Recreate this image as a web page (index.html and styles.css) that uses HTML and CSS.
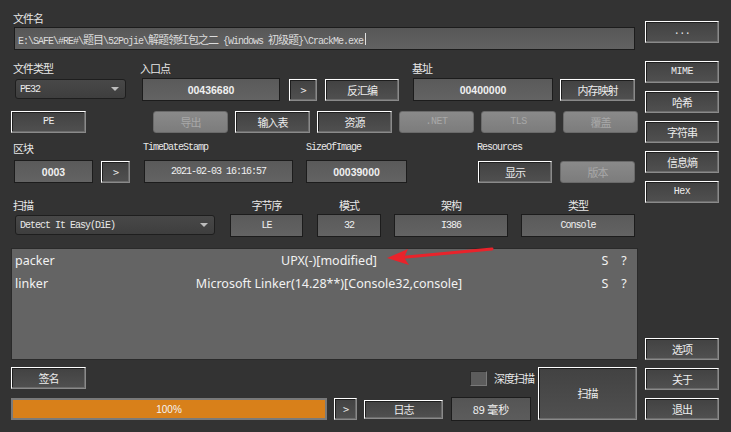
FILE: index.html
```html
<!DOCTYPE html>
<html>
<head>
<meta charset="utf-8">
<link rel="stylesheet" href="styles.css">
</head>
<body>
<div class="app">
  <div class="main">
    <div class="lbl row-a">文件名</div>
    <div class="field path mono"><span class="ptxt">E:\SAFE\#RE#\<span class="cj">题目</span>\52Pojie\<span class="cj">解题领红包之二</span> {Windows <span class="cj">初级题</span>}\CrackMe.exe</span><span class="caret"></span></div>

    <div class="row row-b">
      <div class="col c1">
        <div class="lbl">文件类型</div>
        <div class="ctl"><div class="combo mono w-pe"><span>PE32</span><span class="arr"></span></div></div>
      </div>
      <div class="col c2">
        <div class="lbl">入口点</div>
        <div class="ctl">
          <div class="field num f-ep">00436680</div>
          <button class="btn b-go">&gt;</button>
          <button class="btn b-dis">反汇编</button>
        </div>
      </div>
      <div class="col c3">
        <div class="lbl">基址</div>
        <div class="ctl">
          <div class="field num f-base">00400000</div>
          <button class="btn b-mm">内存映射</button>
        </div>
      </div>
    </div>

    <div class="row row-c">
      <button class="btn mono b75 b-pe">PE</button>
      <button class="btn off b75 b-exp">导出</button>
      <button class="btn b75 g7">输入表</button>
      <button class="btn b75 g7">资源</button>
      <button class="btn off mono b75 g7">.NET</button>
      <button class="btn off mono b75 g7">TLS</button>
      <button class="btn off b75 g7">覆盖</button>
    </div>

    <div class="row row-d">
      <div class="col d1">
        <div class="lbl">区块</div>
        <div class="ctl">
          <div class="field num f-sec">0003</div>
          <button class="btn b-sec">&gt;</button>
        </div>
      </div>
      <div class="col d2">
        <div class="lbl mono">TimeDateStamp</div>
        <div class="ctl"><div class="field mono f-tds"><span class="pre">2021-02-03 16:16:57</span></div></div>
      </div>
      <div class="col d3">
        <div class="lbl mono">SizeOfImage</div>
        <div class="ctl"><div class="field num f-soi">00039000</div></div>
      </div>
      <div class="col d4">
        <div class="lbl mono">Resources</div>
        <div class="ctl">
          <button class="btn b-show">显示</button>
          <button class="btn off b-ver">版本</button>
        </div>
      </div>
    </div>

    <div class="row row-e">
      <div class="col e1">
        <div class="lbl">扫描</div>
        <div class="ctl"><div class="combo mono w-scan"><span class="pre">Detect It Easy(DiE)</span><span class="arr"></span></div></div>
      </div>
      <div class="col e2 ctr">
        <div class="lbl">字节序</div>
        <div class="ctl"><div class="field mono f-le">LE</div></div>
      </div>
      <div class="col e3 ctr">
        <div class="lbl">模式</div>
        <div class="ctl"><div class="field mono f-32">32</div></div>
      </div>
      <div class="col e4 ctr">
        <div class="lbl">架构</div>
        <div class="ctl"><div class="field mono f-arch">I386</div></div>
      </div>
      <div class="col e5 ctr">
        <div class="lbl">类型</div>
        <div class="ctl"><div class="field mono f-type">Console</div></div>
      </div>
    </div>

    <div class="results">
      <div class="res-row"><span class="rt">packer</span><span class="rn">UPX(-)[modified]</span><span class="rs">S</span><span class="rq">?</span></div>
      <div class="res-row"><span class="rt">linker</span><span class="rn">Microsoft Linker(14.28**)[Console32,console]</span><span class="rs">S</span><span class="rq">?</span></div>
      <svg class="arrow" width="110" height="24" viewBox="0 0 110 24">
        <line x1="105" y1="2" x2="14" y2="10.5" stroke="#e8232b" stroke-width="3" stroke-linecap="round"/>
        <polygon points="0,11 21,2 17,10.5 22,18" fill="#e8232b"/>
      </svg>
    </div>

    <div class="bottom">
      <div class="bl">
        <div class="brow1">
          <button class="btn b-sig">签名</button>
          <span class="chk"></span>
          <span class="chk-lbl">深度扫描</span>
        </div>
        <div class="brow2">
          <div class="progress"><span>100%</span></div>
          <button class="btn b-pg">&gt;</button>
          <button class="btn b-log">日志</button>
          <div class="field ms"><span class="pre">89 毫秒</span></div>
        </div>
      </div>
      <button class="btn b-scan">扫描</button>
    </div>
  </div>

  <div class="side">
    <button class="btn sb mono">...</button>
    <button class="btn sb mono s-mime">MIME</button>
    <button class="btn sb">哈希</button>
    <button class="btn sb">字符串</button>
    <button class="btn sb">信息熵</button>
    <button class="btn sb mono">Hex</button>
    <div class="spacer"></div>
    <button class="btn sb">选项</button>
    <button class="btn sb">关于</button>
    <button class="btn sb">退出</button>
  </div>
</div>
</body>
</html>
```

FILE: styles.css
```css
* { box-sizing: border-box; }
html, body {
  margin: 0;
  padding: 0;
  width: 731px;
  height: 432px;
  overflow: hidden;
  background: #333333;
  color: #e6e6e6;
  font-family: "Noto Sans CJK SC", "Liberation Sans", sans-serif;
  font-size: 11px;
  letter-spacing: -1px;
}
.app { display: flex; width: 731px; height: 432px; }
.main { width: 645px; display: flex; flex-direction: column; }
.side {
  width: 74px;
  display: flex;
  flex-direction: column;
  gap: 8px;
  padding: 21px 0 12px;
}
.spacer { flex: 1; }
.s-mime { margin-top: 10px; }

.mono {
  font-family: "Liberation Mono", "Noto Sans CJK SC", monospace;
  font-size: 10px;
  letter-spacing: -1px;
}
.cj { font-family: "Noto Sans CJK SC", sans-serif; font-size: 11px; letter-spacing: -1px; }
.pre, .ptxt { white-space: pre; }

.lbl {
  height: 12px;
  line-height: 12px;
  color: #e8e8e8;
  white-space: nowrap;
}
.row-a { margin: 12px 0 0 13px; }

.field {
  height: 23px;
  display: flex;
  align-items: center;
  justify-content: center;
  border: 1px solid #1c1c1c;
  background: linear-gradient(#5a5a5a, #636363);
  color: #f0f0f0;
  white-space: nowrap;
}
.num {
  font-family: "Liberation Sans", sans-serif;
  font-weight: bold;
  font-size: 10.5px;
  letter-spacing: 0;
}
.path {
  margin: 3px 0 0 14px;
  width: 621px;
  justify-content: flex-start;
  padding-left: 3px;
  background: linear-gradient(#575757, #626262);
  color: #dcdcdc;
}
.caret { display: inline-block; width: 1px; height: 12px; background: #e0e0e0; margin-left: 2px; }

.row { display: flex; align-items: flex-start; }
.col { display: flex; flex-direction: column; }
.ctl { display: flex; align-items: flex-start; height: 23px; }
.ctr { align-items: center; }
.ctr .ctl { align-self: stretch; }

.btn {
  height: 22px;
  padding: 0;
  border: 1px solid;
  border-color: #ffffff #8a8a8a #8a8a8a #ffffff;
  box-shadow: inset -1px -1px 0 #6c6c6c, inset 1px 1px 0 #1e1e1e;
  background: linear-gradient(#424242, #505050);
  color: #ececec;
  font-family: "Noto Sans CJK SC", sans-serif;
  font-size: 11px;
  letter-spacing: -1px;
  line-height: 1;
  flex: none;
}
.btn.mono { font-family: "Liberation Mono", monospace; font-size: 10px; letter-spacing: -0.5px; }
.btn.off {
  border: 1px solid #6a6a6a;
  border-radius: 3px;
  box-shadow: none;
  background: linear-gradient(#8a8a8a, #7c7c7c);
  color: #a8a8a8;
}

.combo {
  position: relative;
  height: 20px;
  margin: 1px 0 0 2px;
  display: flex;
  align-items: center;
  padding-left: 4px;
  border: 1px solid #1e1e1e;
  border-radius: 3px;
  background: linear-gradient(#484848, #3e3e3e);
  color: #e8e8e8;
  white-space: nowrap;
}
.arr {
  position: absolute;
  right: 6px;
  top: 7px;
  width: 0;
  height: 0;
  border-left: 4px solid transparent;
  border-right: 4px solid transparent;
  border-top: 4px solid #bdbdbd;
}

/* row B */
.row-b { margin-top: 12px; }
.row-b .ctl { margin-top: 4px; }
.c1 { margin-left: 13px; width: 113px; }
.w-pe { width: 111px; }
.c2 { margin-left: 14px; }
.f-ep { margin-left: 2px; width: 138px; }
.b-go { margin: 1px 0 0 9px; width: 28px; }
.b-dis { margin: 1px 0 0 8px; width: 74px; }
.c3 { margin-left: 13px; }
.f-base { margin-left: 1px; width: 140px; }
.b-mm { margin: 1px 0 0 7px; width: 75px; }

/* row C */
.row-c { margin-top: 10px; }
.b75 { width: 75px; }
.b-pe { margin-left: 11px; }
.b-exp { margin-left: 67px; }
.g7 { margin-left: 7px; }

/* row D */
.row-d { margin-top: 9px; }
.row-d .ctl { margin-top: 6px; }
.d1 { margin-left: 13px; }
.f-sec { margin-left: 1px; width: 79px; }
.b-sec { margin: 1px 0 0 8px; width: 29px; }
.d2 { margin-left: 13px; }
.f-tds { margin-left: 1px; width: 149px; }
.d3 { margin-left: 13px; }
.f-soi { width: 101px; }
.d4 { margin-left: 70px; }
.b-show { margin: 1px 0 0 1px; width: 74px; }
.b-ver { margin: 1px 0 0 8px; width: 75px; }

/* row E */
.row-e { margin-top: 16px; }
.row-e .ctl { margin-top: 3px; }
.e1 { margin-left: 13px; }
.w-scan { width: 200px; }
.e2 { margin-left: 15px; width: 73px; }
.e3 { margin-left: 14px; width: 64px; }
.e4 { margin-left: 13px; width: 114px; }
.e5 { margin-left: 13px; width: 114px; }
.ctr .field { width: 100%; }

/* results */
.results {
  position: relative;
  margin: 11px 0 0 11px;
  width: 627px;
  height: 112px;
  border: 1px solid #2a2a2a;
  background: #646464;
  font-family: "Noto Sans", "Liberation Sans", sans-serif;
  font-size: 12.5px;
  letter-spacing: 0;
  color: #f2f2f2;
}
.res-row {
  display: grid;
  grid-template-columns: 51px 526px 26px 12px;
  padding-left: 3px;
  height: 23px;
  line-height: 23px;
}
.rn, .rs, .rq { text-align: center; }
.arrow { position: absolute; left: 375px; top: -2px; }

/* bottom */
.bottom { display: flex; margin-top: 7px; }
.bl { width: 538px; display: flex; flex-direction: column; }
.brow1 { display: flex; align-items: flex-start; height: 22px; }
.b-sig { margin-left: 11px; width: 75px; }
.chk {
  margin: 4px 0 0 384px;
  width: 17px;
  height: 15px;
  border: 1px solid;
  border-color: #2a2a2a #7a7a7a #7a7a7a #2a2a2a;
  background: #5c5c5c;
  flex: none;
}
.chk-lbl {
  margin: 4px 0 0 7px;
  white-space: nowrap;
  line-height: 15px;
  color: #e8e8e8;
}
.brow2 { display: flex; align-items: flex-start; margin-top: 9px; height: 22px; }
.progress {
  margin-left: 11px;
  width: 316px;
  height: 22px;
  border: 2px solid #7a7a7a;
  background: #d8801a;
  display: flex;
  align-items: center;
  justify-content: center;
  color: #f4f4f4;
  font-family: "Liberation Sans", sans-serif;
  font-size: 10px;
  letter-spacing: 0;
}
.b-pg { margin-left: 7px; width: 23px; }
.b-log { margin: 2px 0 0 7px; width: 79px; height: 19px; }
.ms {
  margin: -1px 0 0 8px;
  width: 80px;
  height: 24px;
  background: linear-gradient(#555, #5c5c5c);
  font-size: 11px;
  letter-spacing: 0;
}
.b-scan { width: 99px; height: 53px; }
.sb { width: 74px; }
```
